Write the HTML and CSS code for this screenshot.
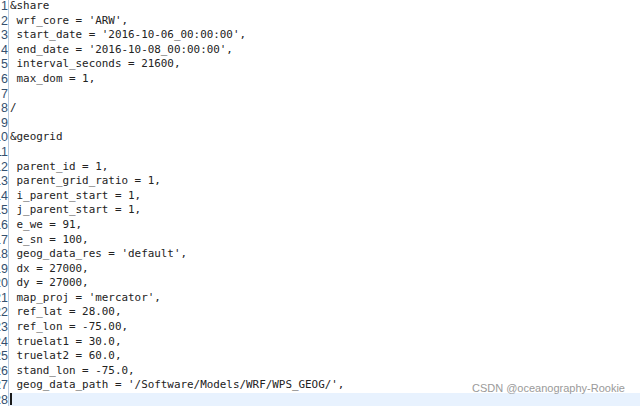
FILE: index.html
```html
<!DOCTYPE html>
<html>
<head>
<meta charset="utf-8">
<link rel="stylesheet" href="styles.css">
</head>
<body>
<div class="editor">
  <div class="gutter">
    <div class="ln">1</div><div class="ln">2</div><div class="ln">3</div><div class="ln">4</div><div class="ln">5</div><div class="ln">6</div><div class="ln">7</div><div class="ln">8</div><div class="ln">9</div><div class="ln">10</div><div class="ln">11</div><div class="ln">12</div><div class="ln">13</div><div class="ln">14</div><div class="ln">15</div><div class="ln">16</div><div class="ln">17</div><div class="ln">18</div><div class="ln">19</div><div class="ln">20</div><div class="ln">21</div><div class="ln">22</div><div class="ln">23</div><div class="ln">24</div><div class="ln">25</div><div class="ln">26</div><div class="ln">27</div><div class="ln">28</div>
  </div>
  <div class="code">
<div class="line">&amp;share</div>
<div class="line"> wrf_core = 'ARW',</div>
<div class="line"> start_date = '2016-10-06_00:00:00',</div>
<div class="line"> end_date = '2016-10-08_00:00:00',</div>
<div class="line"> interval_seconds = 21600,</div>
<div class="line"> max_dom = 1,</div>
<div class="line"> </div>
<div class="line">/</div>
<div class="line"> </div>
<div class="line">&amp;geogrid</div>
<div class="line"> </div>
<div class="line"> parent_id = 1,</div>
<div class="line"> parent_grid_ratio = 1,</div>
<div class="line"> i_parent_start = 1,</div>
<div class="line"> j_parent_start = 1,</div>
<div class="line"> e_we = 91,</div>
<div class="line"> e_sn = 100,</div>
<div class="line"> geog_data_res = 'default',</div>
<div class="line"> dx = 27000,</div>
<div class="line"> dy = 27000,</div>
<div class="line"> map_proj = 'mercator',</div>
<div class="line"> ref_lat = 28.00,</div>
<div class="line"> ref_lon = -75.00,</div>
<div class="line"> truelat1 = 30.0,</div>
<div class="line"> truelat2 = 60.0,</div>
<div class="line"> stand_lon = -75.0,</div>
<div class="line"> geog_data_path = '/Software/Models/WRF/WPS_GEOG/',</div>
<div class="line current"><span class="cursor"></span></div>
  </div>
</div>
<div class="watermark">CSDN @oceanography-Rookie</div>
</body>
</html>
```

FILE: styles.css
```css
html, body {
  margin: 0;
  padding: 0;
  background: #ffffff;
  width: 640px;
  height: 406px;
  overflow: hidden;
}
body {
  position: relative;
}
.editor {
  display: flex;
  margin-top: -1px;
}
.gutter {
  width: 8px;
  overflow: hidden;
  border-right: 1px solid #b9cade;
  display: flex;
  flex-direction: column;
  align-items: flex-end;
  flex: none;
}
.ln {
  height: 14.6px;
  line-height: 14.6px;
  font-family: "Liberation Sans", Arial, sans-serif;
  font-size: 12.5px;
  color: #34506f;
  white-space: nowrap;
}
.code {
  flex: 1;
  padding-left: 1px;
}
.line {
  height: 14.6px;
  line-height: 14.6px;
  font-family: "DejaVu Sans Mono", monospace;
  font-size: 10.9px;
  color: #222222;
  white-space: pre;
}
.current {
  background: #e8f2fe;
  height: 20px;
  margin-left: -1px;
  padding-left: 1px;
}
.cursor {
  display: inline-block;
  width: 2px;
  height: 12px;
  background: #1a1a1a;
  vertical-align: -2px;
}
.watermark {
  position: absolute;
  right: 15px;
  top: 382px;
  font-family: "Liberation Sans", Arial, sans-serif;
  font-size: 11px;
  color: #9a9a9a;
}
```
